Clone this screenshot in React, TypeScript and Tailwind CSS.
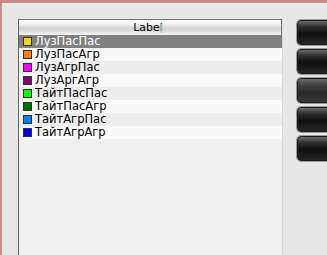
import React from "react";

const items = [
  { name: "ЛузПасПас", color: "#f8d21c" },
  { name: "ЛузПасАгр", color: "#ff8000" },
  { name: "ЛузАгрПас", color: "#ff00ff" },
  { name: "ЛузАргАгр", color: "#800080" },
  { name: "ТайтПасПас", color: "#00ff00" },
  { name: "ТайтПасАгр", color: "#007000" },
  { name: "ТайтАгрПас", color: "#0080ff" },
  { name: "ТайтАгрАгр", color: "#0000ff" },
];

export default function App() {
  return (
    <div
      className="w-[327px] h-[255px] overflow-hidden bg-[#e8e8e8] border-t-[3px] border-l-[2px] border-[#c88a8a] pl-[16px] pt-[16px] flex items-start gap-[14px]"
      style={{ fontFamily: '"DejaVu Sans", Verdana, sans-serif' }}
    >
      <div className="w-[265px] h-[240px] shrink-0 bg-[#f0f0f0] border-l border-[#606060] border-r-[#dadada] border-r flex flex-col">
        <div className="relative h-[16px] border-t border-[#707070] border-r border-r-[#707070] bg-[linear-gradient(to_bottom,#ffffff_0%,#f4f4f4_25%,#d2d2d2_55%,#e4e4e4_80%,#f6f6f6_100%)] flex items-center justify-center">
          <span className="text-[11px] leading-none text-black -ml-[4px]">Label</span>
          <div className="absolute left-[142px] top-[4px] w-px h-[9px] bg-[#7cc4f0]" />
        </div>
        {items.map((it, i) => {
          const sel = i === 0;
          const bg = sel ? "bg-[#808080]" : i % 2 === 1 ? "bg-[#f9f9f9]" : "bg-[#ededed]";
          return (
            <div key={it.name} className={`h-[13px] flex items-center pl-[4px] ${bg}`}>
              <div
                className="w-[9px] h-[9px] border border-[#303030] shrink-0"
                style={{ backgroundColor: it.color }}
              />
              <span
                className={`ml-[3px] text-[11.5px] leading-none ${sel ? "text-white" : "text-black"}`}
              >
                {it.name}
              </span>
            </div>
          );
        })}
      </div>
      <div className="flex flex-col gap-[4px] pt-[1px] shrink-0">
        {[0, 1, 2, 3, 4].map((k) => (
          <div
            key={k}
            className={`w-[40px] h-[25px] rounded-[4px] border border-[#1a1a1a] shadow-[0_0_0_1px_#9a9a9a] ${
              k === 2
                ? "bg-[linear-gradient(to_bottom,#6a6a6a_0%,#3e3e3e_30%,#2a2a2a_60%,#383838_100%)]"
                : "bg-[linear-gradient(to_bottom,#6a6a6a_0%,#2e2e2e_25%,#0e0e0e_55%,#262626_100%)]"
            }`}
          />
        ))}
      </div>
    </div>
  );
}
